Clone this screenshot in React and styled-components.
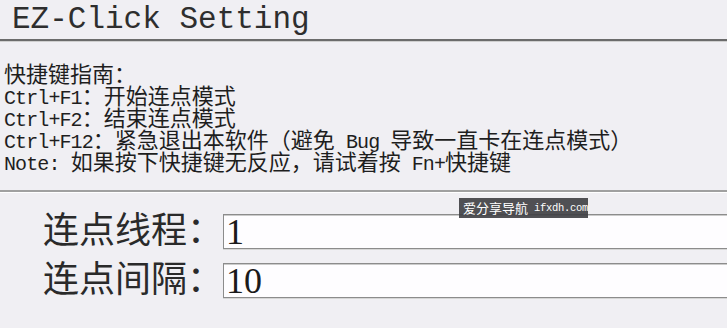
import React from 'react';
import styled, { createGlobalStyle } from 'styled-components';

const GlobalStyle = createGlobalStyle`
  html, body {
    margin: 0;
    padding: 0;
    background: #f0eff3;
    overflow: hidden;
  }
`;

const Window = styled.div`
  position: relative;
  width: 727px;
  height: 328px;
  background: #f0eff3;
  overflow: hidden;
  color: #262626;
`;

const Header = styled.div`
  height: 35px;
  padding: 4px 0 0 12px;
  border-bottom: 2px solid #6b6b6b;
  box-shadow: 0 1px 0 #cfcfcf;
  font-family: "Liberation Mono", monospace;
  font-size: 31px;
  line-height: 31px;
  color: #2e2e2e;
`;

const Guide = styled.div`
  padding: 20px 0 19px 4px;
  border-bottom: 2px solid #a0a0a0;
  box-shadow: 0 1px 0 #ffffff;
  font-family: "Noto Sans CJK SC", sans-serif;
  font-size: 22px;
  line-height: 22px;
  color: #1e1e1e;
`;

const GuideLine = styled.div`
  height: 22px;
  white-space: pre;
`;

// ascii runs get the monospace face, everything else stays CJK
const Latin = styled.span`
  font-family: "Liberation Mono", monospace;
  font-size: ${props => props.size || '20px'};
  letter-spacing: ${props => props.spacing || '-0.9px'};
  line-height: 10px;
`;

const Mixed = ({ text, size, spacing }) =>
  text.split(/([\x20-\x7e]+)/).filter(Boolean).map((part, i) =>
    /^[\x20-\x7e]+$/.test(part)
      ? <Latin key={i} size={size} spacing={spacing}>{part}</Latin>
      : <span key={i}>{part}</span>
  );

const Form = styled.div`
  display: flex;
  flex-direction: column;
  gap: 14px;
  padding: 22px 0 0 43px;
`;

const Row = styled.div`
  display: flex;
  align-items: center;
  height: 35px;
`;

const Label = styled.span`
  flex: none;
  padding-bottom: 9px;
  font-family: "Noto Sans CJK SC", sans-serif;
  font-size: 36px;
  line-height: 35px;
  color: #2a2a2a;
  white-space: nowrap;
`;

const Field = styled.input`
  flex: none;
  box-sizing: border-box;
  width: 540px;
  height: 35px;
  margin: 0;
  padding: 0 0 0 2px;
  border: 1px solid #8c8c8c;
  box-shadow: inset 0 1px 0 #cbcbcb, 0 1px 0 #d6d6d6;
  background: #fefdff;
  font-family: "Liberation Serif", serif;
  font-size: 36px;
  line-height: 33px;
  color: #1a1a1a;
  outline: none;
`;

const Watermark = styled.div`
  position: absolute;
  left: 459px;
  top: 198px;
  width: 129px;
  height: 20px;
  box-sizing: border-box;
  padding-left: 4px;
  display: flex;
  align-items: center;
  background: rgba(62, 62, 66, 0.9);
  color: #fff;
  font-family: "Noto Sans CJK SC", sans-serif;
  font-size: 13px;
  line-height: 20px;
  white-space: pre;
`;

const guide = [
  '快捷键指南：',
  'Ctrl+F1：开始连点模式',
  'Ctrl+F2：结束连点模式',
  'Ctrl+F12：紧急退出本软件（避免 Bug 导致一直卡在连点模式）',
  'Note: 如果按下快捷键无反应，请试着按 Fn+快捷键',
];

const fields = [
  { label: '连点线程：', value: '1' },
  { label: '连点间隔：', value: '10' },
];

export default function App() {
  return (
    <Window>
      <GlobalStyle />
      <Header>EZ-Click Setting</Header>
      <Guide>
        {guide.map(line => (
          <GuideLine key={line}><Mixed text={line} /></GuideLine>
        ))}
      </Guide>
      <Form>
        {fields.map(f => (
          <Row key={f.label}>
            <Label>{f.label}</Label>
            <Field defaultValue={f.value} readOnly />
          </Row>
        ))}
      </Form>
      <Watermark>
        <Mixed text="爱分享导航 ifxdh.com" size="10.5px" spacing="-0.3px" />
      </Watermark>
    </Window>
  );
}
